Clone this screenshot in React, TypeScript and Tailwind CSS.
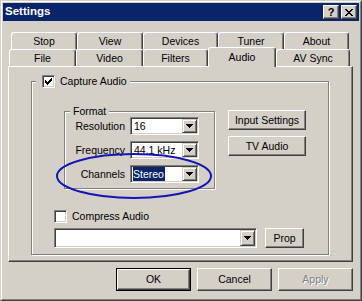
import React from 'react';

const raised =
  'bg-[#d4d0c8] border border-t-white border-l-white border-r-[#404040] border-b-[#404040] shadow-[inset_-1px_-1px_#808080]';
const sunken =
  'border border-t-[#808080] border-l-[#808080] border-r-white border-b-white shadow-[inset_1px_1px_#404040,inset_-1px_-1px_#d4d0c8]';
const etched = 'border border-[#808080] shadow-[inset_1px_1px_#fff,1px_1px_#fff]';

const Pixels = ({ rows, w, h }: { rows: string[]; w: number; h: number }) => (
  <svg width={w} height={h} viewBox={`0 0 ${w} ${h}`} shapeRendering="crispEdges">
    {rows.map((r, y) =>
      r.split('').map((c, x) => (c === 'X' ? <rect key={`${x}-${y}`} x={x} y={y} width={1} height={1} fill="#000" /> : null))
    )}
  </svg>
);

const arrow = ['XXXXXXX', '.XXXXX.', '..XXX..', '...X...'];
const check = ['......X', '.....XX', 'X...XXX', 'XX.XXX.', 'XXXXX..', '.XXX...', '..X....'];
const cross = ['XX....XX', '.XX..XX.', '..XXXX..', '...XX...', '..XXXX..', '.XX..XX.', 'XX....XX'];

const Checkbox = ({ on }: { on?: boolean }) => (
  <div className={`w-[13px] h-[13px] bg-white flex items-center justify-center shrink-0 ${sunken}`}>
    {on && <Pixels rows={check} w={7} h={7} />}
  </div>
);

const DropBtn = () => (
  <div className="w-[15px] h-full flex items-center justify-center bg-[#d4d0c8] border border-t-[#d4d0c8] border-l-[#d4d0c8] border-r-[#404040] border-b-[#404040] shadow-[inset_1px_1px_#fff,inset_-1px_-1px_#808080]">
    <Pixels rows={arrow} w={7} h={4} />
  </div>
);

const Combo = ({ value, selected, w, h }: { value?: string; selected?: boolean; w: string; h: string }) => (
  <div className={`${w} ${h} bg-white flex ${sunken} p-[1px]`}>
    <div className="flex-1 flex items-center pl-[1px] overflow-hidden">
      {value &&
        (selected ? (
          <span className="h-full w-[32px] flex items-center bg-[#0a246a] text-white overflow-hidden whitespace-nowrap">{value}</span>
        ) : (
          <span className="pl-[1px] whitespace-nowrap">{value}</span>
        ))}
    </div>
    <DropBtn />
  </div>
);

const Button = ({ label, w, h }: { label: string; w: string; h: string }) => (
  <div className={`${w} ${h} flex items-center justify-center ${raised}`}>{label}</div>
);

const Tab = ({ label, w, selected }: { label: string; w: string; selected?: boolean }) => (
  <div
    className={`${w} ${
      selected ? 'h-[20px] -mb-[1px] relative z-10' : 'h-[17px]'
    } flex items-center justify-center bg-[#d4d0c8] border-t border-l border-r border-t-white border-l-white border-r-[#404040] rounded-t-[3px] shadow-[inset_-1px_0_#808080]`}
  >
    {label}
  </div>
);

const FormatRow = ({ label, value, selected }: { label: string; value: string; selected?: boolean }) => (
  <div className="flex items-center h-[18px]">
    <div className="w-[60px] text-right">{label}</div>
    <div className="ml-[5px]">
      <Combo value={value} selected={selected} w="w-[69px]" h="h-[18px]" />
    </div>
  </div>
);

export default function App() {
  return (
    <div className="relative w-[362px] h-[301px] bg-[#d4d0c8] border border-t-[#d4d0c8] border-l-[#d4d0c8] border-r-[#404040] border-b-[#404040] font-['Liberation_Sans',Arial,sans-serif] text-[10.5px] text-black leading-none">
      <div className="w-full h-full border border-t-white border-l-white border-r-[#808080] border-b-[#808080] p-[1px] flex flex-col">
        {/* Title bar */}
        <div className="h-[18px] bg-[#0a246a] flex items-center pl-[2px] pr-[2px]">
          <span className="text-white font-bold text-[11.5px]">Settings</span>
          <div className="ml-auto flex gap-[2px]">
            <div className={`w-[16px] h-[14px] flex items-center justify-center ${raised} font-bold text-[11px]`}>?</div>
            <div className={`w-[16px] h-[14px] flex items-center justify-center ${raised}`}>
              <Pixels rows={cross} w={8} h={7} />
            </div>
          </div>
        </div>

        {/* Tabs */}
        <div className="mt-[11px] ml-[8px] flex items-end h-[17px]">
          <Tab label="Stop" w="w-[66px]" />
          <Tab label="View" w="w-[66px]" />
          <Tab label="Devices" w="w-[75px]" />
          <Tab label="Tuner" w="w-[66px]" />
          <Tab label="About" w="w-[65px]" />
        </div>
        <div className="ml-[6px] flex items-end h-[17px]">
          <Tab label="File" w="w-[67px]" />
          <Tab label="Video" w="w-[67px]" />
          <Tab label="Filters" w="w-[65px]" />
          <Tab label="Audio" w="w-[68px]" selected />
          <Tab label="AV Sync" w="w-[74px]" />
        </div>

        {/* Tab page */}
        <div className="ml-[5px] w-[345px] h-[196px] border border-t-white border-l-white border-r-[#404040] border-b-[#404040] shadow-[inset_-1px_-1px_#808080] pl-[22px] pt-[14px]">
          <div className={`w-[298px] h-[174px] flex flex-col ${etched}`}>
            <div className="self-start flex items-center h-[13px] -mt-[7px] ml-[4px] pl-[6px] pr-[3px] bg-[#d4d0c8]">
              <Checkbox on />
              <span className="ml-[5px]">Capture Audio</span>
            </div>

            <div className="mt-[23px] ml-[32px] flex items-start">
              <div className={`w-[151px] h-[78px] flex flex-col ${etched}`}>
                <div className="self-start h-[13px] -mt-[7px] -mb-[6px] ml-[5px] px-[3px] flex items-center bg-[#d4d0c8]">Format</div>
                <div className="mt-[5px] flex flex-col gap-[6px]">
                  <FormatRow label="Resolution" value="16" />
                  <FormatRow label="Frequency" value="44.1 kHz" />
                  <FormatRow label="Channels" value="Stereo" selected />
                </div>
              </div>
              <div className="ml-[13px] -mt-[1px] flex flex-col gap-[6px]">
                <Button label="Input Settings" w="w-[78px]" h="h-[20px]" />
                <Button label="TV Audio" w="w-[78px]" h="h-[20px]" />
              </div>
            </div>

            <div className="mt-[21px] ml-[22px] flex items-center h-[13px]">
              <Checkbox />
              <span className="ml-[5px]">Compress Audio</span>
            </div>
            <div className="mt-[5px] ml-[22px] flex items-center">
              <Combo w="w-[203px]" h="h-[20px]" />
              <div className="ml-[8px]">
                <Button label="Prop" w="w-[39px]" h="h-[20px]" />
              </div>
            </div>
          </div>
        </div>

        {/* Dialog buttons */}
        <div className="mt-[6px] pr-[6px] flex justify-end gap-[6px]">
          <div className="w-[75px] h-[23px] border border-black">
            <div className={`w-full h-full flex items-center justify-center ${raised}`}>OK</div>
          </div>
          <Button label="Cancel" w="w-[75px]" h="h-[23px]" />
          <div className={`w-[75px] h-[23px] flex items-center justify-center ${raised} text-[#808080] [text-shadow:1px_1px_0_#fff]`}>
            Apply
          </div>
        </div>
      </div>

      {/* hand-drawn highlight */}
      <svg className="absolute left-0 top-0 pointer-events-none" width="362" height="301">
        <ellipse cx="133" cy="175" rx="77" ry="22" fill="none" stroke="#1515b5" strokeWidth="2" />
      </svg>
    </div>
  );
}
